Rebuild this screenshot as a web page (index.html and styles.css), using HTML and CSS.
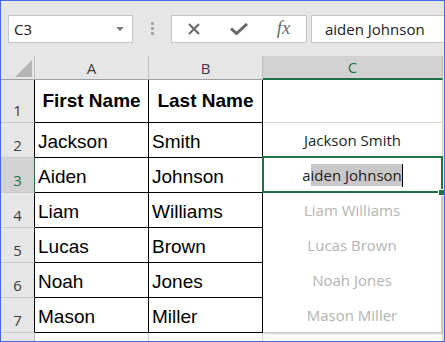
FILE: index.html
```html
<html>
<head>
<title>Flash Fill</title>
<link rel="stylesheet" href="styles.css">
</head>
<body>

<div class="window">

  <div class="toolbar">
    <div class="namebox">
      <span>C3</span>
      <svg width="8" height="4" viewBox="0 0 8 4"><polygon points="0,0 8,0 4,4" fill="#767676"/></svg>
    </div>
    <div class="grip"><i></i><i></i><i></i></div>
    <div class="fxbuttons">
      <span><svg width="14" height="14" viewBox="0 0 14 14"><path d="M2 2 L12 12 M12 2 L2 12" stroke="#676767" stroke-width="2"/></svg></span>
      <span><svg width="18" height="12" viewBox="0 0 18 12"><path d="M1 5.5 L6.5 10.5 L17 1" stroke="#676767" stroke-width="3" fill="none"/></svg></span>
      <span class="fx">fx</span>
    </div>
    <div class="formula">aiden Johnson</div>
  </div>

  <div class="sheet">
    <div class="corner"><svg width="17" height="17" viewBox="0 0 17 17"><polygon points="17,0 17,17 0,17" fill="#b5b5b5"/></svg></div>
    <div class="colhead">A</div>
    <div class="colhead">B</div>
    <div class="colhead sel">C</div>

    <div class="rowhead">1</div>
    <div class="cell title">First Name</div>
    <div class="cell title">Last Name</div>
    <div class="ccell"></div>

    <div class="rowhead">2</div>
    <div class="cell">Jackson</div>
    <div class="cell">Smith</div>
    <div class="ccell">Jackson Smith</div>

    <div class="rowhead sel">3</div>
    <div class="cell">Aiden</div>
    <div class="cell">Johnson</div>
    <div class="ccell active">a<span class="picked">iden Johnson</span><span class="caret"></span><span class="handle"></span></div>

    <div class="rowhead">4</div>
    <div class="cell">Liam</div>
    <div class="cell">Williams</div>
    <div class="preview">
      <span>Liam Williams</span>
      <span>Lucas Brown</span>
      <span>Noah Jones</span>
      <span>Mason Miller</span>
    </div>

    <div class="rowhead">5</div>
    <div class="cell">Lucas</div>
    <div class="cell">Brown</div>

    <div class="rowhead">6</div>
    <div class="cell">Noah</div>
    <div class="cell">Jones</div>

    <div class="rowhead">7</div>
    <div class="cell">Mason</div>
    <div class="cell">Miller</div>

    <div class="rowhead last">8</div>
    <div class="cell empty"></div>
    <div class="cell empty"></div>
    <div class="ccell"></div>
  </div>

</div>

</body>
</html>
```

FILE: styles.css
```css
html, body {
	margin: 0;
	padding: 0;
}

body {
	background-color: white;
}

.window {
	width: 445px;
	height: 342px;
	box-sizing: border-box;
	border: 1px solid rgb(65, 105, 225);
	background-color: rgb(230, 230, 230);
	overflow: hidden;
	font-family: "Open Sans", "Noto Sans", sans-serif;
}

/* formula bar */

.toolbar {
	display: flex;
	align-items: flex-start;
	height: 55px;
	box-sizing: border-box;
	padding: 14px 0 0 7px;
}

.namebox {
	display: flex;
	align-items: center;
	justify-content: space-between;
	width: 125px;
	height: 28px;
	box-sizing: border-box;
	padding: 0 8px 0 5px;
	border: 1px solid rgb(198, 198, 198);
	background-color: white;
	font-size: 15px;
	color: rgb(34, 34, 34);
}

.grip {
	display: flex;
	flex-direction: column;
	gap: 2px;
	margin: 7px 0 0 18px;
}

.grip i {
	display: block;
	width: 3px;
	height: 3px;
	background-color: rgb(166, 166, 166);
}

.fxbuttons {
	display: flex;
	width: 136px;
	height: 28px;
	box-sizing: border-box;
	margin-left: 17px;
	border: 1px solid rgb(198, 198, 198);
	background-color: white;
}

.fxbuttons span {
	flex: 1;
	display: flex;
	align-items: center;
	justify-content: center;
}

.fxbuttons span.fx {
	font-family: "Liberation Serif", serif;
	font-style: italic;
	font-size: 19px;
	color: rgb(110, 110, 110);
	padding-bottom: 2px;
}

.formula {
	flex: 1;
	height: 28px;
	box-sizing: border-box;
	margin-left: 4px;
	padding-left: 13px;
	border: 1px solid rgb(198, 198, 198);
	border-right: none;
	background-color: white;
	font-size: 15px;
	line-height: 26px;
	color: rgb(34, 34, 34);
}

/* sheet grid */

.sheet {
	display: grid;
	grid-template-columns: 34px 114px 114px 180px;
	grid-template-rows: 24px 43px repeat(7, 35px);
}

.sheet > div {
	box-sizing: border-box;
}

.corner {
	display: flex;
	align-items: flex-end;
	justify-content: flex-end;
	padding: 0 2px 2px 0;
	border-right: 1px solid rgb(190, 190, 190);
	border-bottom: 1px solid rgb(160, 160, 160);
}

.colhead {
	display: flex;
	align-items: center;
	justify-content: center;
	border-right: 1px solid rgb(190, 190, 190);
	border-bottom: 1px solid rgb(160, 160, 160);
	font-size: 15px;
	color: rgb(60, 60, 60);
}

.colhead.sel {
	background-color: rgb(210, 210, 210);
	color: rgb(33, 115, 70);
	border-bottom: 2px solid rgb(33, 115, 70);
}

.rowhead {
	display: flex;
	align-items: flex-end;
	justify-content: center;
	padding-bottom: 2px;
	border-right: 1px solid black;
	border-bottom: 1px solid rgb(200, 200, 200);
	font-size: 15px;
	color: rgb(60, 60, 60);
}

.rowhead.sel {
	background-color: rgb(210, 210, 210);
	color: rgb(33, 115, 70);
	border-right: 1px solid rgb(33, 115, 70);
}

.rowhead.last {
	border-right: 1px solid rgb(190, 190, 190);
}

.cell {
	display: flex;
	align-items: flex-end;
	padding: 0 0 4px 3px;
	background-color: white;
	border-right: 1px solid black;
	border-bottom: 1px solid black;
	font-family: "Liberation Sans", Arial, sans-serif;
	font-size: 19px;
	color: black;
}

.cell.title {
	align-items: center;
	justify-content: center;
	padding: 0;
	font-weight: bold;
}

.cell.empty {
	border-right: 1px solid rgb(212, 212, 212);
	border-bottom: 1px solid rgb(212, 212, 212);
}

.ccell {
	position: relative;
	display: flex;
	align-items: center;
	justify-content: center;
	background-color: white;
	border-right: 1px solid rgb(212, 212, 212);
	border-bottom: 1px solid rgb(212, 212, 212);
	font-size: 15px;
	color: rgb(30, 30, 30);
}

.ccell.active::after {
	content: "";
	position: absolute;
	top: -2px;
	left: -1px;
	right: -1px;
	bottom: -1px;
	border: 2px solid rgb(33, 115, 70);
}

.picked {
	background-color: rgb(200, 200, 200);
	padding: 1px 0;
}

.caret {
	display: inline-block;
	width: 1px;
	height: 23px;
	background-color: black;
}

.handle {
	position: absolute;
	right: -3px;
	bottom: -4px;
	width: 5px;
	height: 5px;
	background-color: rgb(33, 115, 70);
	border: 1px solid white;
	z-index: 2;
}

.preview {
	grid-row: span 4;
	position: relative;
	z-index: 1;
	display: grid;
	grid-template-rows: repeat(4, 1fr);
	margin-right: 1px;
	background-color: white;
	border-right: 1px solid rgb(200, 200, 200);
	border-bottom: 1px solid rgb(200, 200, 200);
	box-shadow: 1px 1px 2px rgba(0, 0, 0, 0.2);
	font-size: 15px;
	color: rgb(180, 180, 180);
}

.preview span {
	display: flex;
	align-items: center;
	justify-content: center;
}
```
